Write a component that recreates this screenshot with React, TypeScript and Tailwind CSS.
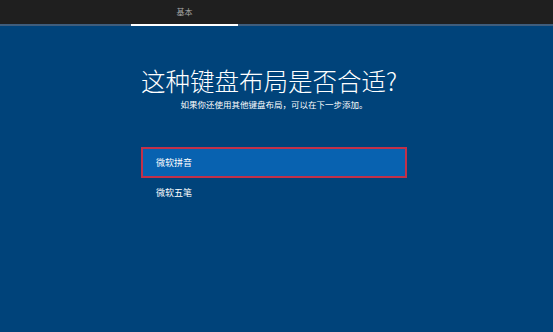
const CJK = '"Noto Sans CJK SC", "Noto Sans", sans-serif';

const layouts = [
  { id: 'pinyin', label: '微软拼音', selected: true },
  { id: 'wubi', label: '微软五笔', selected: false },
];

export default function App() {
  return (
    <div className="w-[553px] h-[332px] flex flex-col bg-[#00437a] overflow-hidden" style={{ fontFamily: CJK }}>
      {/* Top tab strip */}
      <div className="h-[26px] flex bg-[#1f1f1f] border-b-2 border-[#3f5d7c]">
        <div className="ml-[131px] w-[107px] -mb-[2px] border-b-2 border-white flex items-start justify-center pt-[8px]">
          <span className="text-[8px] leading-none text-[#a8a8a8]">基本</span>
        </div>
      </div>

      {/* Main content */}
      <div className="flex-1 flex flex-col ml-[141px] w-[266px]">
        <h1 className="mt-[40px] pr-[10px] text-center whitespace-nowrap text-[24.5px] leading-[30px] font-light text-white">
          这种键盘布局是否合适?
        </h1>
        <p className="mt-[2px] text-center whitespace-nowrap text-[8.5px] leading-[12px] text-white">
          如果你还使用其他键盘布局，可以在下一步添加。
        </p>

        <div className="mt-[37px] flex flex-col">
          {layouts.map(l => (
            <div
              key={l.id}
              className={
                l.selected
                  ? 'h-[31px] flex items-center pl-[13px] border-2 border-[#c23049] bg-[#0862b0]'
                  : 'h-[28px] flex items-center pl-[15px]'
              }
            >
              <span className="text-[9px] leading-none text-white">{l.label}</span>
            </div>
          ))}
        </div>
      </div>
    </div>
  );
}
